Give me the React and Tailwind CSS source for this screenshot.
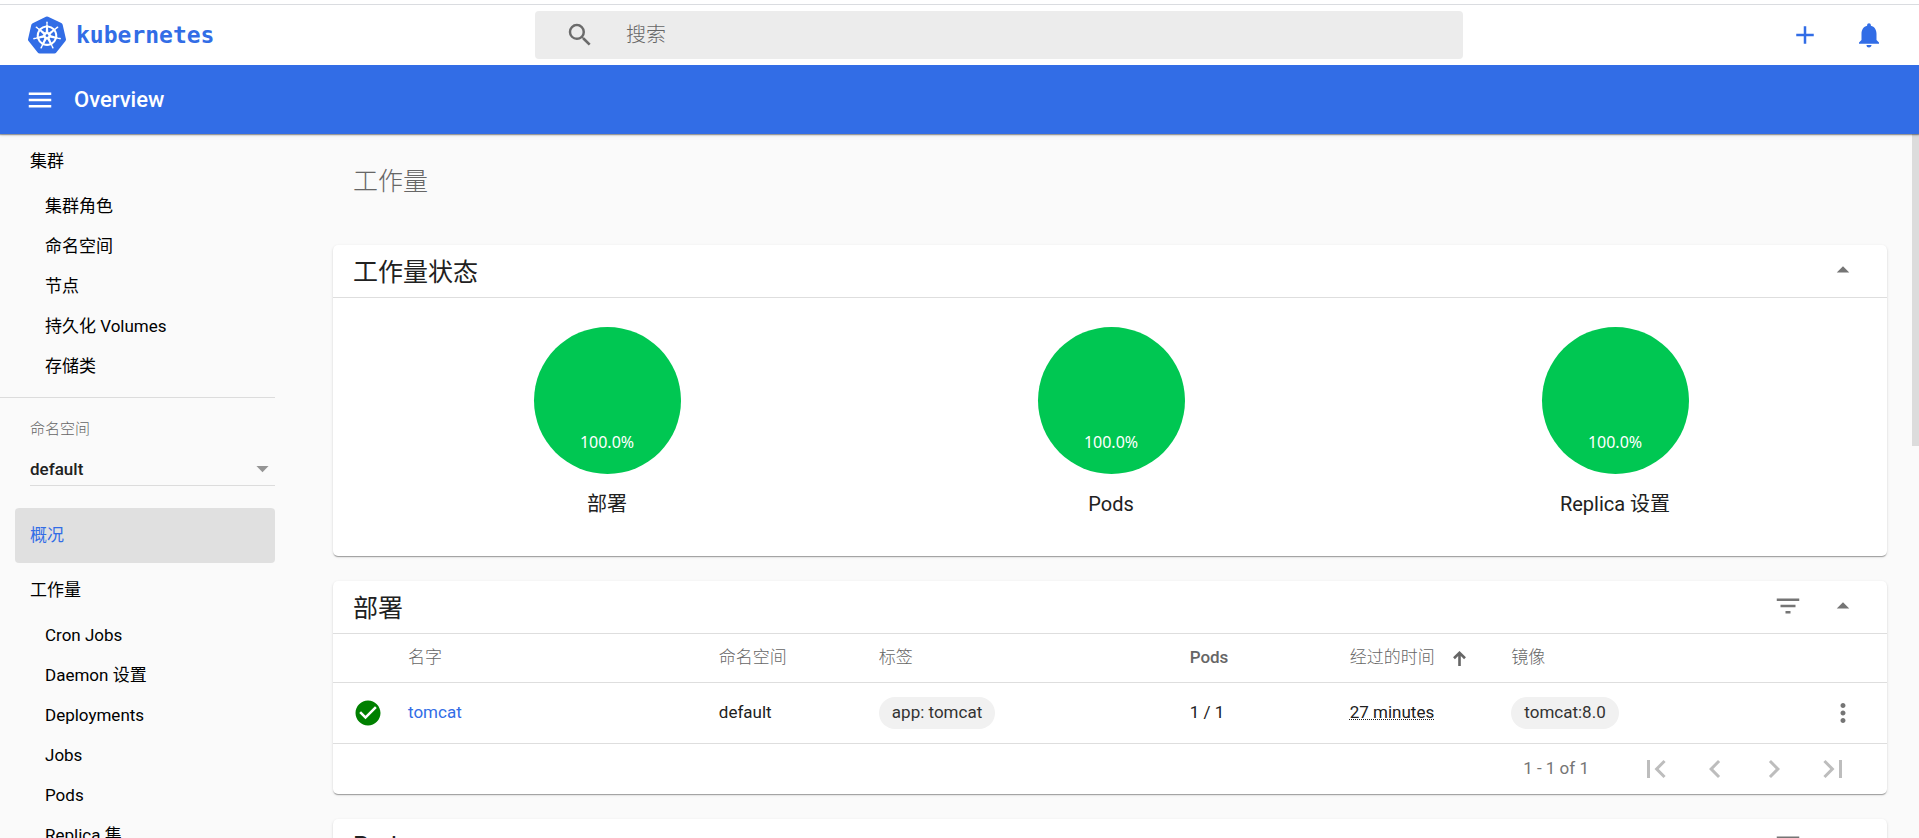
import React from 'react';
import {
    MdAdd,
    MdArrowDropDown,
    MdArrowDropUp,
    MdCheckCircle,
    MdChevronLeft,
    MdChevronRight,
    MdFilterList,
    MdFirstPage,
    MdLastPage,
    MdMenu,
    MdMoreVert,
    MdNotifications,
    MdSearch,
} from 'react-icons/md';
import { SiKubernetes } from 'react-icons/si';

const clusterLinks = ['集群角色', '命名空间', '节点', '持久化 Volumes', '存储类'];
const workloadLinks = ['Cron Jobs', 'Daemon 设置', 'Deployments', 'Jobs', 'Pods', 'Replica 集'];

const statuses = [
    { label: '部署', value: '100.0%' },
    { label: 'Pods', value: '100.0%' },
    { label: 'Replica 设置', value: '100.0%' },
];

const deployments = [
    {
        name: 'tomcat',
        namespace: 'default',
        label: 'app: tomcat',
        pods: '1 / 1',
        age: '27 minutes',
        image: 'tomcat:8.0',
    },
];

export default function App() {
    return (
        <div className="flex h-screen flex-col overflow-hidden bg-[#fafafa] font-[Roboto,'Noto_Sans_CJK_SC',sans-serif] text-[17px] text-[#212121]">
            <TopBar />
            <div className="flex min-h-0 flex-1">
                <Sidebar />
                <main className="min-w-0 flex-1 overflow-hidden pr-[25px] pl-[58px]">
                    <h1 className="h-[111px] px-5 pt-[30px] text-[25px] leading-9 font-light text-[#666]">工作量</h1>
                    <div className="flex flex-col gap-[25px]">
                        <Card title="工作量状态">
                            <div className="grid grid-cols-3 pt-[29px] pr-5 pb-[37px] pl-[22px]">
                                {statuses.map((status) => (
                                    <StatusChart key={status.label} {...status} />
                                ))}
                            </div>
                        </Card>
                        <Card title="部署" filter>
                            <DeploymentTable />
                            <Paginator />
                        </Card>
                        <Card title="Pods" filter />
                    </div>
                </main>
                {/* Scroll thumb */}
                <div className="h-[312px] w-[7px] bg-[#dcdcdc]" />
            </div>
        </div>
    );
}

function TopBar() {
    return (
        <header className="relative z-10 shrink-0 bg-white pt-1 shadow-[0_1px_1px_rgba(0,0,0,0.3),0_1px_3px_rgba(0,0,0,0.2)]">
            <div className="grid h-[61px] grid-cols-[535fr_928fr_456fr] items-center border-t border-[#dadce0]">
                <a href="#" className="flex items-center gap-[10px] pl-7 text-[#326de6]">
                    <SiKubernetes size={38} />
                    <span className="font-['DejaVu_Sans_Mono',monospace] text-[23px] leading-8 font-bold">kubernetes</span>
                </a>
                <label className="flex h-12 items-center gap-[31px] rounded-sm bg-[#ececec] px-[30px]">
                    <MdSearch size={30} className="shrink-0 text-[#6b6b6b]" />
                    <input
                        type="text"
                        placeholder="搜索"
                        aria-label="搜索"
                        className="min-w-0 flex-1 bg-transparent text-[20px] font-light outline-none placeholder:text-[#666]"
                    />
                </label>
                <div className="flex justify-end gap-[34px] pr-[35px] text-[#326de6]">
                    <button type="button" aria-label="Create">
                        <MdAdd size={30} />
                    </button>
                    <button type="button" aria-label="Notifications">
                        <MdNotifications size={30} />
                    </button>
                </div>
            </div>
            <div className="flex h-[69px] items-center gap-[19px] bg-[#326de6] px-[25px] text-white">
                <button type="button" aria-label="Menu">
                    <MdMenu size={30} />
                </button>
                <span className="text-[22px] font-medium">Overview</span>
            </div>
        </header>
    );
}

function Sidebar() {
    return (
        <nav className="w-[275px] shrink-0 overflow-hidden text-black">
            <NavGroup title="集群" links={clusterLinks} />
            <div className="mt-[10px] border-t border-[#dcdcdc] pt-[21px] pl-[30px]">
                <label htmlFor="namespace" className="block text-[15px] leading-5 font-light text-[#666]">
                    命名空间
                </label>
                <div className="relative mt-[15px] border-b border-[#dcdcdc]">
                    <select
                        id="namespace"
                        className="block h-[31px] w-full appearance-none bg-transparent font-medium text-[#212121] outline-none"
                    >
                        <option>default</option>
                    </select>
                    <MdArrowDropDown
                        size={29}
                        className="pointer-events-none absolute top-0 -right-[2px] text-[#959595]"
                    />
                </div>
            </div>
            <a
                href="#"
                className="mt-[22px] ml-[15px] flex h-[55px] items-center rounded-sm bg-[#e0e0e0] px-[15px] text-[#326de6]"
            >
                概况
            </a>
            <NavGroup title="工作量" links={workloadLinks} />
        </nav>
    );
}

function NavGroup({ title, links }) {
    return (
        <div>
            <a href="#" className="flex h-[53px] items-center pt-[2px] pl-[30px]">
                {title}
            </a>
            {links.map((link) => (
                <a key={link} href="#" className="flex h-10 items-center pl-[45px]">
                    {link}
                </a>
            ))}
        </div>
    );
}

function Card({ title, filter, children }) {
    return (
        <section className="rounded-[5px] bg-white shadow-[0_2px_1px_-1px_rgba(0,0,0,0.2),0_1px_1px_rgba(0,0,0,0.14),0_1px_3px_rgba(0,0,0,0.12)]">
            <div className="flex h-[53px] items-center justify-between border-b border-[#dedede] pr-[29px] pl-5">
                <h2 className="pt-1 text-[25px] leading-9">{title}</h2>
                <div className="flex gap-[25px] pb-[2px] text-[#757575]">
                    {filter && (
                        <button type="button" aria-label="Filter">
                            <MdFilterList size={30} />
                        </button>
                    )}
                    <button type="button" aria-label="Collapse">
                        <MdArrowDropUp size={30} />
                    </button>
                </div>
            </div>
            {children}
        </section>
    );
}

function StatusChart({ label, value }) {
    return (
        <div className="flex flex-col items-center gap-[15px]">
            <div className="flex size-[147px] items-end justify-center rounded-full bg-[#00c752] pb-5">
                <span className="font-['Noto_Sans',sans-serif] text-[16px] leading-6 text-white">{value}</span>
            </div>
            <span className="text-[20px] leading-[30px]">{label}</span>
        </div>
    );
}

function DeploymentTable() {
    return (
        <table className="w-full table-fixed border-separate border-spacing-0 text-left">
            <colgroup>
                <col className="w-[75px]" />
                <col className="w-[20%]" />
                <col className="w-[10.3%]" />
                <col className="w-[20%]" />
                <col className="w-[10.3%]" />
                <col className="w-[10.4%]" />
                <col className="w-[20%]" />
                <col />
            </colgroup>
            <thead>
                <tr className="text-[#666] *:h-[49px] *:border-b *:border-[#dedede]">
                    <th />
                    <th className="font-light">名字</th>
                    <th className="font-light">命名空间</th>
                    <th className="font-light">标签</th>
                    <th className="font-medium">Pods</th>
                    <th className="font-light">
                        <button type="button" className="flex items-center gap-[18px]">
                            经过的时间
                            <SortArrow />
                        </button>
                    </th>
                    <th className="font-light">镜像</th>
                    <th />
                </tr>
            </thead>
            <tbody>
                {deployments.map((row) => (
                    <tr key={row.name} className="*:h-[61px] *:border-b *:border-[#dedede]">
                        <td className="pl-5">
                            <MdCheckCircle size={30} className="text-[#008000]" />
                        </td>
                        <td>
                            <a href="#" className="text-[#326de6]">
                                {row.name}
                            </a>
                        </td>
                        <td>{row.namespace}</td>
                        <td>
                            <Chip>{row.label}</Chip>
                        </td>
                        <td>{row.pods}</td>
                        <td>
                            <span className="underline decoration-dotted decoration-1">{row.age}</span>
                        </td>
                        <td>
                            <Chip>{row.image}</Chip>
                        </td>
                        <td className="pr-[29px]">
                            <button type="button" aria-label="Actions" className="ml-auto block text-[#757575]">
                                <MdMoreVert size={30} />
                            </button>
                        </td>
                    </tr>
                ))}
            </tbody>
        </table>
    );
}

function Chip({ children }) {
    return (
        <span className="inline-flex h-8 items-center rounded-full bg-[#f1f1f1] px-[13px] align-middle text-[#333]">
            {children}
        </span>
    );
}

function SortArrow() {
    return (
        <svg width="13" height="15" viewBox="0 0 13 15" fill="none" stroke="currentColor" strokeWidth="2.6">
            <path d="M6.5 15V2M1 7.2L6.5 1.8L12 7.2" />
        </svg>
    );
}

function Paginator() {
    return (
        <div className="flex h-[50px] items-center justify-end pr-[25px]">
            <span className="mr-[37px] text-[#757575]">1 - 1 of 1</span>
            <PageButton label="First page" icon={<MdFirstPage size={36} />} />
            <PageButton label="Previous page" icon={<MdChevronLeft size={36} />} />
            <PageButton label="Next page" icon={<MdChevronRight size={36} />} />
            <PageButton label="Last page" icon={<MdLastPage size={36} />} />
        </div>
    );
}

function PageButton({ label, icon }) {
    return (
        <button type="button" aria-label={label} disabled className="flex w-[59px] justify-center text-[#bdbdbd]">
            {icon}
        </button>
    );
}
